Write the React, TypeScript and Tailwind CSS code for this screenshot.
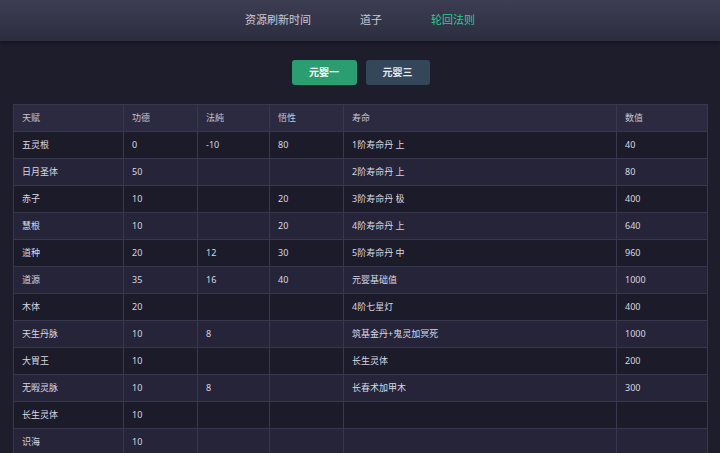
import React from "react";

const COLS = [
  { name: "天赋", w: "w-[110px]" },
  { name: "功德", w: "w-[74px]" },
  { name: "法純", w: "w-[72px]" },
  { name: "悟性", w: "w-[74px]" },
  { name: "寿命", w: "w-[273px]" },
  { name: "数值", w: "w-[91px]" },
];

const ROWS: string[][] = [
  ["五灵根", "0", "-10", "80", "1阶寿命丹 上", "40"],
  ["日月圣体", "50", "", "", "2阶寿命丹 上", "80"],
  ["赤子", "10", "", "20", "3阶寿命丹 极", "400"],
  ["慧根", "10", "", "20", "4阶寿命丹 上", "640"],
  ["道种", "20", "12", "30", "5阶寿命丹 中", "960"],
  ["道源", "35", "16", "40", "元婴基础值", "1000"],
  ["木体", "20", "", "", "4阶七星灯", "400"],
  ["天生丹脉", "10", "8", "", "筑基金丹+鬼灵加冥死", "1000"],
  ["大胃王", "10", "", "", "长生灵体", "200"],
  ["无暇灵脉", "10", "8", "", "长春术加甲木", "300"],
  ["长生灵体", "10", "", "", "", ""],
  ["识海", "10", "", "", "", ""],
];

export default function App() {
  return (
    <div
      className="w-[720px] h-[453px] overflow-hidden bg-[#1e1d2c] text-[#d9d9e1]"
      style={{ fontFamily: '"Noto Sans", "Noto Sans CJK SC", sans-serif' }}
    >
      {/* top nav */}
      <header className="h-[41px] bg-gradient-to-b from-[#3d3d53] to-[#2d2d40] shadow-[0_2px_4px_rgba(0,0,0,0.35)] flex items-center justify-center gap-[49px] text-[11px]">
        <span className="text-[#cacad4]">资源刷新时间</span>
        <span className="text-[#cacad4]">道子</span>
        <span className="text-[#22d08f]">轮回法则</span>
      </header>

      {/* tabs */}
      <div className="flex justify-center gap-[9px] pt-[19px] pb-[19px] pl-[1px]">
        <button className="w-[65px] h-[25px] rounded-[3px] bg-[#2a9e70] text-white text-[10px] font-bold">元婴一</button>
        <button className="w-[64px] h-[25px] rounded-[3px] bg-[#34465a] text-[#e6e8ee] text-[10px] font-bold">元婴三</button>
      </div>

      {/* table */}
      <div className="pl-[13px]">
        <table className="border-collapse text-[9px] table-fixed">
          <thead>
            <tr className="bg-[#2b2a40] h-[27px]">
              {COLS.map((c) => (
                <th key={c.name} className={`${c.w} border border-[#38374d] px-[8px] text-left font-normal text-[#c6c6d0]`}>
                  {c.name}
                </th>
              ))}
            </tr>
          </thead>
          <tbody>
            {ROWS.map((r, i) => (
              <tr key={i} className={`h-[27px] ${i % 2 === 0 ? "bg-[#1c1b2a]" : "bg-[#252439]"}`}>
                {r.map((v, j) => (
                  <td key={j} className="border border-[#38374d] px-[8px] text-left">
                    {v}
                  </td>
                ))}
              </tr>
            ))}
          </tbody>
        </table>
      </div>
    </div>
  );
}
